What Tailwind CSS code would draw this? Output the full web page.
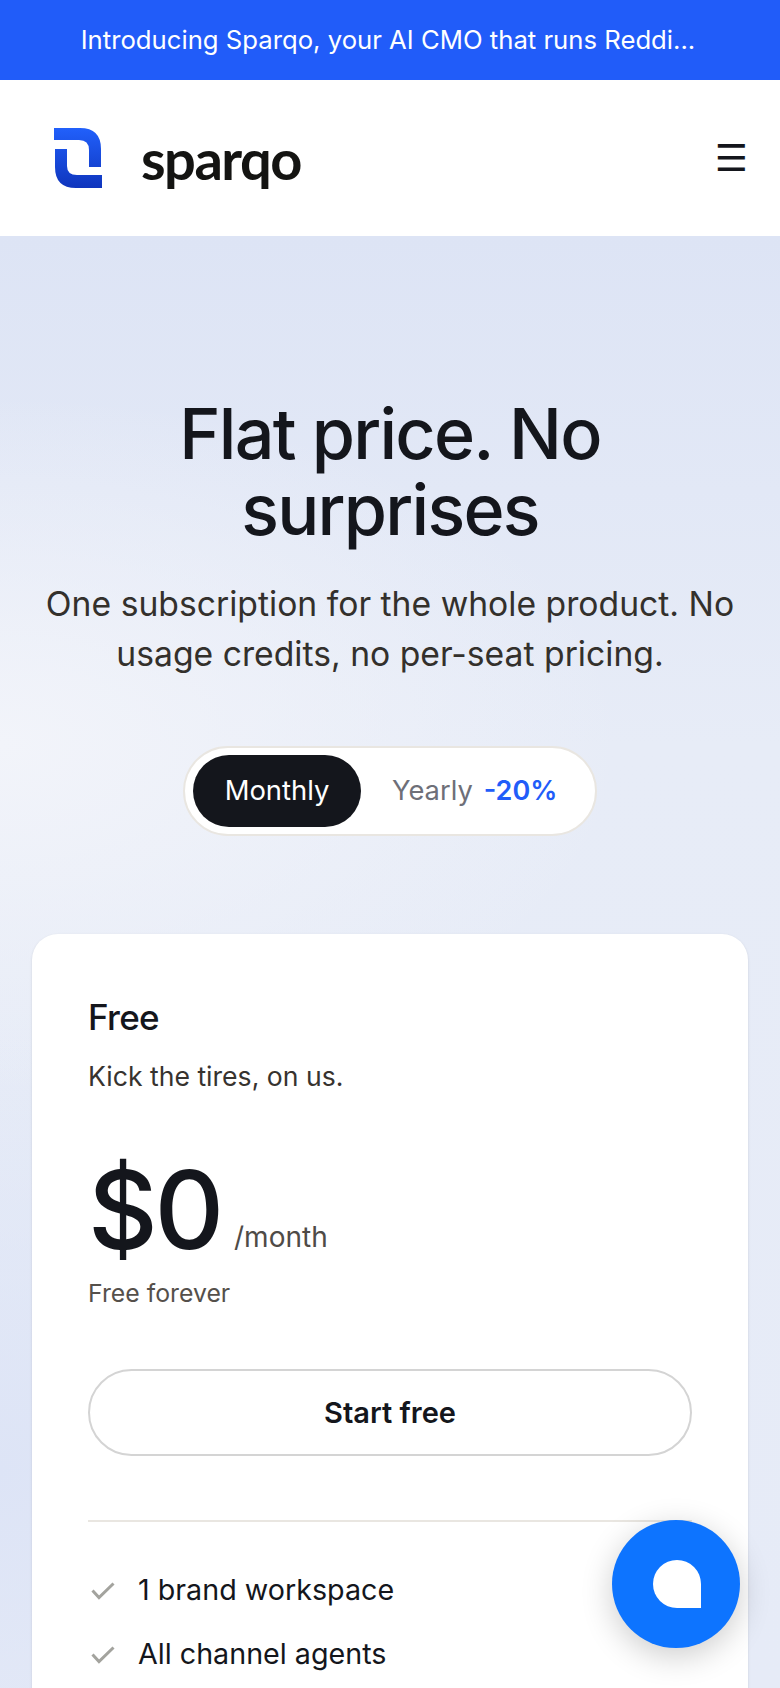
<!DOCTYPE html>
<html lang="en">
<head>
<meta charset="utf-8">
<script src="https://cdn.jsdelivr.net/npm/@tailwindcss/browser@4"></script>
<title>Sparqo pricing</title>
</head>
<body class="font-['Inter',sans-serif] bg-white text-[#14161c]">
<div class="relative w-[780px] h-[1688px] overflow-hidden">
  <div class="h-20 bg-[#215cf9] flex items-center justify-center pr-1 text-white text-[25.7px]">Introducing Sparqo, your AI CMO that runs Reddi...</div>
  <header class="h-[156px] bg-white flex items-center justify-between pl-[54px] pr-8">
    <div class="flex items-center gap-[39px]">
      <svg width="48" height="60" viewBox="0 0 48 60">
        <defs><linearGradient id="g" x1="0" y1="0" x2="0" y2="1"><stop offset="0" stop-color="#2160fb"/><stop offset="1" stop-color="#0f35bd"/></linearGradient></defs>
        <path d="M0 0H26Q47 0 47 21V39H35V22Q35 12 25 12H0Z M1 21H13V38Q13 47 23 47H48V60H22Q1 60 1 39Z" fill="url(#g)"/>
      </svg>
      <span class="font-['Lato',sans-serif] font-bold text-[56px] tracking-[-1.5px] leading-none text-[#141412] mt-0.5">sparqo</span>
    </div>
    <span class="text-[37px] leading-none text-[#14161c] font-['DejaVu_Sans',sans-serif]">☰</span>
  </header>
  <main class="h-[1452px] bg-[radial-gradient(ellipse_80%_24%_at_0%_35%,#f2f4fa_0%,#f2f4fa00_100%),radial-gradient(ellipse_60%_30%_at_0%_85%,#dde4f6_0%,#dde4f600_100%),linear-gradient(to_bottom,#dde4f5_0%,#e7ecf7_35%,#e6ebf7_100%)] px-8 pt-[160px]">
    <h1 class="mx-auto max-w-[600px] text-[70px] leading-[76px] font-medium tracking-[-0.025em] text-center">Flat price. No surprises</h1>
    <p class="mt-[31px] text-[33.7px] leading-[50px] text-center text-[#33302c]">One subscription for the whole product. No usage credits, no per-seat pricing.</p>
    <div class="mt-[67px] mx-auto w-[414px] h-[90px] rounded-full bg-white border-2 border-[#e9e6e1] flex items-center pl-2 gap-[31px]">
      <span class="w-[168px] h-[72px] rounded-full bg-[#14161c] text-white text-[27.4px] flex items-center justify-center">Monthly</span>
      <span class="text-[27.3px] text-[#6e6f78]">Yearly</span>
      <span class="-ml-[20px] text-[27px] font-semibold text-[#215cf9]">-20%</span>
    </div>
    <section class="mt-[98px] h-[900px] rounded-[26px] bg-white px-[56px] pt-[61px] shadow-sm">
      <h2 class="text-[35px] leading-[44px] font-medium tracking-[-0.02em]">Free</h2>
      <p class="mt-[17px] text-[26.6px] leading-[40px] text-[#37332f]">Kick the tires, on us.</p>
      <div class="mt-[54px] flex items-baseline gap-[13px]">
        <span class="text-[108px] leading-[120px] font-medium tracking-[-0.03em]">$0</span>
        <span class="text-[28px] text-[#4f4b47] -translate-y-0.5">/month</span>
      </div>
      <p class="mt-[5px] text-[24.8px] leading-[36px] text-[#55504b]">Free forever</p>
      <div class="mt-[58px] h-[87px] rounded-full border-2 border-[#d4d4d4] flex items-center justify-center text-[29px] font-semibold">Start free</div>
      <div class="mt-[64px] h-0.5 bg-[#e9e6e1]"></div>
      <ul class="mt-[44px] flex flex-col gap-[16px] text-[28.7px] leading-[48px]">
        <li class="flex items-center gap-[20px]"><svg width="30" height="30" viewBox="0 0 30 30" fill="none" stroke="#a3a39e" stroke-width="3"><path d="M4.5 15.5l6.5 7L25.5 8.5"/></svg>1 brand workspace</li>
        <li class="flex items-center gap-[20px]"><svg width="30" height="30" viewBox="0 0 30 30" fill="none" stroke="#a3a39e" stroke-width="3"><path d="M4.5 15.5l6.5 7L25.5 8.5"/></svg>All channel agents</li>
      </ul>
    </section>
  </main>
  <button class="absolute left-[612px] top-[1520px] w-[128px] h-[128px] rounded-full bg-[#0d74ff] shadow-[0_8px_32px_rgba(0,0,0,0.2)] flex items-center justify-center">
    <span class="block w-12 h-12 ml-px bg-white rounded-t-full rounded-bl-full"></span>
  </button>
</div>
</body>
</html>
